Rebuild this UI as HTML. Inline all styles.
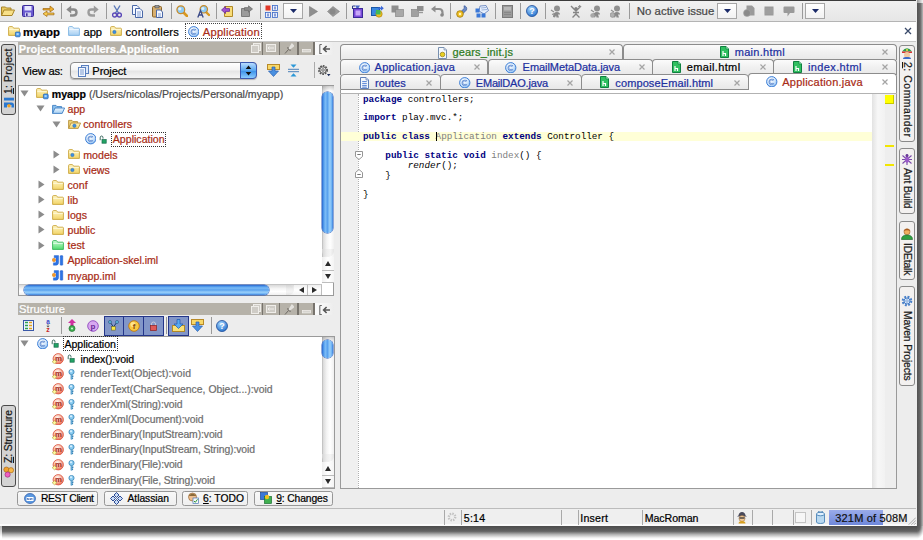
<!DOCTYPE html>
<html><head><meta charset="utf-8"><title>myapp - IntelliJ IDEA</title>
<style>
*{box-sizing:border-box;margin:0;padding:0}
html,body{width:923px;height:540px;overflow:hidden;background:#fff}
body{font-family:"Liberation Sans",sans-serif;font-size:10.6px;color:#000;position:relative}
.a{position:absolute}
.t{position:absolute;white-space:pre;line-height:14px;height:14px;-webkit-text-stroke:.22px currentColor}
#win{position:absolute;left:0;top:0;width:916.6px;height:525.8px;background:#ededed;}
.red{color:#a82c16}
.blue{color:#1c2fa0}
.green{color:#2c7a1c}
.gray{color:#7a7a7a}
.sep{position:absolute;width:1px;background:#9a9a9a;top:3px;height:16px}
.hdr{position:absolute;background:#b6b2a9;color:#fff;font-weight:bold;font-size:11px}
.tab{position:absolute;border:1px solid #8c8c8c;border-bottom:none;border-radius:4px 4px 0 0;background:linear-gradient(#fbfbfb,#f1f1f1 45%,#e8e8e8)}
.vtab{position:absolute;border:1px solid #8a8a8a;border-radius:3px;background:#ececec}
.vtxt{-webkit-text-stroke:.22px currentColor;position:absolute;white-space:pre;transform-origin:0 0;line-height:12px;height:12px;font-size:10.4px}
.btn{position:absolute;border:1px solid #979797;border-radius:2.5px;background:linear-gradient(#f8f8f8,#efefef);height:15px;top:491.3px}
.code{position:absolute;font-family:"Liberation Mono",monospace;font-size:9.3px;line-height:9.6px;height:9.6px;white-space:pre;color:#000}
.kw{font-weight:bold;color:#000080}
.un{color:#808080}
.x{position:absolute;color:#9a9a9a;font-size:11px;line-height:12px}
</style></head>
<body>
<div class="a" style="left:2px;top:525.8px;width:914.6px;height:13px;background:linear-gradient(180deg,rgba(0,0,0,.7) 0,rgba(0,0,0,.62) 40%,rgba(0,0,0,.3) 65%,rgba(0,0,0,.08) 88%,rgba(0,0,0,0) 100%)"></div>
<div class="a" style="left:916.6px;top:3px;width:8px;height:522.8px;background:linear-gradient(90deg,rgba(0,0,0,.68) 0,rgba(0,0,0,.6) 40%,rgba(0,0,0,.32) 70%,rgba(0,0,0,.12) 100%)"></div>
<div class="a" style="left:916.6px;top:525.8px;width:8px;height:13px;background:radial-gradient(ellipse 8px 13px at 0 0,rgba(0,0,0,.68) 0,rgba(0,0,0,.6) 40%,rgba(0,0,0,.3) 65%,rgba(0,0,0,.08) 88%,rgba(0,0,0,0) 100%)"></div>
<div class="a" style="left:0px;top:525.8px;width:2px;height:11px;background:linear-gradient(180deg,rgba(0,0,0,.3),rgba(0,0,0,0))"></div>
<div class="a" style="left:916.6px;top:0px;width:6px;height:3px;background:linear-gradient(90deg,rgba(0,0,0,.4),rgba(0,0,0,.05))"></div>
<div id="win">
<svg class="a" width="0" height="0" style="left:0;top:0"><defs><linearGradient id="fy" x1="0" y1="0" x2="0" y2="1"><stop offset="0" stop-color="#fff6c4"/><stop offset="1" stop-color="#f2d468"/></linearGradient><linearGradient id="fb" x1="0" y1="0" x2="0" y2="1"><stop offset="0" stop-color="#eef7fe"/><stop offset="1" stop-color="#a4cef2"/></linearGradient><linearGradient id="fg" x1="0" y1="0" x2="0" y2="1"><stop offset="0" stop-color="#ccfdd4"/><stop offset="1" stop-color="#4edb6e"/></linearGradient></defs></svg>
<div class="a" style="left:0;top:0;width:916px;height:1.2px;background:#3c3c3c"></div>
<div class="a" style="left:0;top:1px;width:916px;height:20px;background:linear-gradient(#f1f1f1,#e6e6e6)"></div>
<div class="a" style="left:0;top:21px;width:916px;height:1px;background:#b4b4b4"></div>
<div class="a" style="left:0;top:22px;width:916px;height:19px;background:#fff"></div>
<div class="a" style="left:0;top:41px;width:916px;height:1px;background:#c8c8c8"></div>
<div class="sep" style="left:61px"></div>
<div class="sep" style="left:106px"></div>
<div class="sep" style="left:171px"></div>
<div class="sep" style="left:216px"></div>
<div class="sep" style="left:260px"></div>
<div class="sep" style="left:346px"></div>
<div class="sep" style="left:450px"></div>
<div class="sep" style="left:495px"></div>
<div class="sep" style="left:520px"></div>
<div class="sep" style="left:545px"></div>
<div class="sep" style="left:629px"></div>
<div class="sep" style="left:802px"></div>
<svg class="a" style="left:1.0px;top:5.0px" width="14" height="12" viewBox="0 0 14 12"><path d="M0.5 10.5 V2 H4.5 L5.5 3 H10 V5" fill="#e8c860" stroke="#a88428" stroke-width="1"/><path d="M0.5 10.5 L3 5 H13.5 L11 10.5 Z" fill="#f8e088" stroke="#a88428" stroke-width="1"/></svg>
<svg class="a" style="left:22.0px;top:5.0px" width="12" height="12" viewBox="0 0 12 12"><rect x="0.5" y="0.5" width="11" height="11" rx="1" fill="#6a5ad0" stroke="#3a2a98"/><rect x="2.5" y="1" width="7" height="4.5" fill="#e8e8ff"/><rect x="3" y="7.5" width="6" height="4" fill="#d0d0f0"/><rect x="4" y="8.3" width="1.6" height="2.6" fill="#3a2a98"/></svg>
<svg class="a" style="left:41.5px;top:5.0px" width="13" height="12" viewBox="0 0 13 12"><path d="M1 3.5 H8 V1 L12 4.2 L8 7 V5 H1 Z" fill="#f0b030" stroke="#a06810" stroke-width=".7"/><path d="M12 8 H5 V6 L1 8.8 L5 11.5 V9.8 H12 Z" fill="#f8cc50" stroke="#a06810" stroke-width=".7"/></svg>
<svg class="a" style="left:66.0px;top:5.0px" width="12" height="12" viewBox="0 0 12 12"><path d="M3.5 4.5 H7.5 Q10.5 4.5 10.5 7.5 Q10.5 10.5 7 10.5 H4" fill="none" stroke="#8a8a8a" stroke-width="2.4"/><path d="M0.3 4.5 L5.2 0.5 V8.5 Z" fill="#8a8a8a"/></svg>
<svg class="a" style="left:87.0px;top:5.0px" width="12" height="12" viewBox="0 0 12 12"><path d="M8.5 4.5 H4.5 Q1.5 4.5 1.5 7.5 Q1.5 10.5 5 10.5 H8" fill="none" stroke="#9c9c9c" stroke-width="2.4"/><path d="M11.7 4.5 L6.8 0.5 V8.5 Z" fill="#9c9c9c"/></svg>
<svg class="a" style="left:112.0px;top:4.5px" width="10" height="13" viewBox="0 0 10 13"><path d="M2 0.5 L6.5 8 M8 0.5 L3.5 8" stroke="#5a78b8" stroke-width="1.4"/><circle cx="2.6" cy="10" r="2" fill="none" stroke="#5a48b8" stroke-width="1.4"/><circle cx="7.4" cy="10" r="2" fill="none" stroke="#5a48b8" stroke-width="1.4"/></svg>
<svg class="a" style="left:131.5px;top:4.5px" width="11" height="13" viewBox="0 0 11 13"><path d="M0.5 0.5 H5 L7 2.5 V9.5 H0.5 Z" fill="#f4f8ff" stroke="#4a68a8"/><path d="M3.5 3.5 H8 L10.5 6 V12.5 H3.5 Z" fill="#f4f8ff" stroke="#4a68a8"/><path d="M5 7 H9 M5 9 H9 M5 11 H9" stroke="#6a88c8" stroke-width=".8"/></svg>
<svg class="a" style="left:151.5px;top:4.5px" width="11" height="13" viewBox="0 0 11 13"><rect x="0.5" y="1.5" width="9" height="10.5" rx="1" fill="#d8b070" stroke="#8a6428"/><rect x="3" y="0.3" width="4" height="2.6" fill="#9a9a9a" stroke="#555" stroke-width=".6"/><path d="M4.5 5 H8.5 L10.5 7 V12.5 H4.5 Z" fill="#f4f8ff" stroke="#4a68a8"/><path d="M6 9 H9 M6 11 H9" stroke="#6a88c8" stroke-width=".8"/></svg>
<svg class="a" style="left:176.0px;top:5.0px" width="12" height="12" viewBox="0 0 12 12"><path d="M7 7 L11 11" stroke="#d89820" stroke-width="2.6" stroke-linecap="round"/><circle cx="4.8" cy="4.8" r="3.9" fill="#8ccaf4" stroke="#c88a28" stroke-width="1.2"/><circle cx="3.8" cy="3.8" r="1.6" fill="#d8f0ff"/></svg>
<svg class="a" style="left:196.5px;top:4.5px" width="13" height="13" viewBox="0 0 13 13"><path d="M8.5 6.5 L12 10" stroke="#d89820" stroke-width="2.4" stroke-linecap="round"/><circle cx="6.8" cy="4.3" r="3.7" fill="#8ccaf4" stroke="#c88a28" stroke-width="1.2"/><circle cx="5.9" cy="3.4" r="1.5" fill="#d8f0ff"/><path d="M0.8 12.5 L3.5 5.5 L6.2 12.5 M1.8 10 H5.2" stroke="#3a4a88" stroke-width="1.3" fill="none"/></svg>
<svg class="a" style="left:221.0px;top:5.0px" width="12" height="12" viewBox="0 0 12 12"><path d="M3.5 1.5 H11.5 V11.5 H3.5 Z" fill="#f8dc78" stroke="#b08a28"/><path d="M0.5 5 L4.5 1.5 V3.6 H8.5 V6.4 H4.5 V8.5 Z" fill="#a050d0" stroke="#5a2090" stroke-width=".7"/></svg>
<svg class="a" style="left:241.0px;top:5.0px" width="12" height="12" viewBox="0 0 12 12"><path d="M0.5 3.5 H8.5 V11.5 H0.5 Z" fill="#9a9a9a" stroke="#7a7a7a"/><path d="M11.5 4 L7.5 0.8 V2.6 H3.5 V5.4 H7.5 V7.2 Z" fill="#8a8a8a" stroke="#6a6a6a" stroke-width=".7"/></svg>
<svg class="a" style="left:264.5px;top:4.5px" width="13" height="13" viewBox="0 0 13 13"><rect x="0.5" y="0.5" width="5" height="5" fill="#e03828"/><rect x="7.5" y="0.5" width="5" height="5" fill="#e8f0ff" stroke="#3a68c8" stroke-width=".8"/><rect x="0.5" y="7.5" width="5" height="5" fill="#e8f0ff" stroke="#3a68c8" stroke-width=".8"/><rect x="7.5" y="7.5" width="5" height="5" fill="#e8f0ff" stroke="#3a68c8" stroke-width=".8"/><path d="M10 1.5 V4.5 M3 8.5 V11.5 M10 8.5 V11.5" stroke="#2a48a8" stroke-width="1"/></svg>
<div class="a" style="left:283px;top:3px;width:20px;height:16px;border:1px solid #a6a6a6;background:linear-gradient(#ffffff,#f2f2f2)"></div>
<svg class="a" style="left:289.5px;top:9.3px" width="7" height="4" viewBox="0 0 7 4"><path d="M0 0 H7 L3.5 4 Z" fill="#1a2a68"/></svg>
<svg class="a" style="left:308.5px;top:5.5px" width="9" height="11" viewBox="0 0 9 11"><path d="M0.5 0.5 L8.5 5.5 L0.5 10.5 Z" fill="#8e8e8e" stroke="#787878" stroke-width=".6"/></svg>
<svg class="a" style="left:326.5px;top:5.5px" width="13" height="11" viewBox="0 0 13 11"><path d="M0.5 5.5 L6 0.5 L12.5 5.5 L6 10.5 Z" fill="#9a9a9a" stroke="#808080" stroke-width=".6"/><circle cx="5.5" cy="5.5" r="3" fill="#888"/></svg>
<svg class="a" style="left:351.5px;top:4.5px" width="11" height="13" viewBox="0 0 11 13"><path d="M0.5 1 H3 M0.5 1 V4" stroke="#2a3a88" fill="none"/><path d="M3 0.5 H8 L6.5 3 H4.5 Z" fill="#4a68c8"/><rect x="1.5" y="3.5" width="9" height="9" fill="#7a4ad8" stroke="#3a2a98"/><rect x="3.5" y="5.5" width="5" height="5" fill="#c8a8f8"/></svg>
<svg class="a" style="left:370.5px;top:4.5px" width="13" height="13" viewBox="0 0 13 13"><rect x="0.5" y="2.5" width="8" height="8" fill="#3a88e0" stroke="#1a58a8"/><circle cx="8" cy="9" r="3.2" fill="#f0c020" stroke="#a07808" stroke-width=".6"/><rect x="5" y="5" width="4.5" height="4.5" fill="#40b858"/><path d="M7 2.5 H10 V0.8 L12.8 3.3 L10 5.8 V4.2 H7 Z" fill="#3a68d8"/></svg>
<svg class="a" style="left:390.5px;top:5.0px" width="13" height="12" viewBox="0 0 13 12"><rect x="0.5" y="0.5" width="7" height="7" fill="#8e8e8e"/><rect x="4.5" y="4.5" width="8" height="7" fill="#a8a8a8" stroke="#888" stroke-width=".7"/></svg>
<svg class="a" style="left:410.5px;top:5.0px" width="13" height="12" viewBox="0 0 13 12"><rect x="0.5" y="4.5" width="7" height="7" fill="#a0a0a0" stroke="#888" stroke-width=".7"/><rect x="6" y="1" width="6.5" height="5" fill="#8e8e8e"/><path d="M8 7.5 H12" stroke="#999" stroke-width="1.4"/></svg>
<svg class="a" style="left:430.5px;top:5.0px" width="13" height="12" viewBox="0 0 13 12"><path d="M2 4 H8 Q11.5 4 11.5 7.5 V10" fill="none" stroke="#8e8e8e" stroke-width="2.2"/><path d="M0 4 L4.5 0.5 V7.5 Z" fill="#8e8e8e"/><circle cx="11" cy="10" r="1.8" fill="#888"/></svg>
<svg class="a" style="left:456.0px;top:4.5px" width="12" height="13" viewBox="0 0 12 13"><path d="M8 0.8 Q11.5 1.5 10.5 5 L6 9.5 L4 7.5 L8.3 3.3 Z" fill="#6a8ac8" stroke="#3a5898" stroke-width=".7"/><circle cx="4" cy="9" r="3.3" fill="#f0c028" stroke="#a07808" stroke-width=".8"/><circle cx="4" cy="9" r="1.2" fill="#fff6c0"/></svg>
<svg class="a" style="left:475.0px;top:4.5px" width="14" height="13" viewBox="0 0 14 13"><path d="M5 1 L11 0.5 L13.5 5.5 L9 9 L4 6 Z" fill="#e8f0fc" stroke="#5a7ab8" stroke-width=".8"/><path d="M6 3 L11 2.5 M6.5 5 L12 4.5" stroke="#7a9ad0" stroke-width=".7"/><rect x="0.5" y="3.5" width="4" height="4" fill="#3a78d8"/><rect x="1.5" y="8.5" width="4" height="4" fill="#3a78d8"/><rect x="6.5" y="8.5" width="4" height="4" fill="#3a78d8"/></svg>
<svg class="a" style="left:501.5px;top:4.5px" width="11" height="13" viewBox="0 0 11 13"><rect x="0.5" y="0.5" width="10" height="12" fill="#9a9a9a" stroke="#7a7a7a"/><rect x="2" y="2" width="7" height="3.5" fill="#b8b8b8"/><path d="M2 7.5 H9 M2 9.5 H9" stroke="#848484" stroke-width=".8"/></svg>
<svg class="a" style="left:526.0px;top:5.0px" width="12" height="12" viewBox="0 0 12 12"><defs><radialGradient id="hg" cx=".4" cy=".3" r=".8"><stop offset="0" stop-color="#a8d8ff"/><stop offset="1" stop-color="#1a68c8"/></radialGradient></defs><circle cx="6" cy="6" r="5.5" fill="url(#hg)" stroke="#1a4a98" stroke-width=".8"/><text x="6" y="9.3" font-family="Liberation Sans, sans-serif" font-size="9" font-weight="bold" fill="#fff" text-anchor="middle">?</text></svg>
<svg class="a" style="left:550.0px;top:4.5px" width="12" height="13" viewBox="0 0 12 13"><circle cx="7" cy="3.5" r="3" fill="#909090"/><path d="M3 12 Q3 7 7 7 Q10 7 10 9.5 L8 9.5 L9 12.5 H6.5 L6 10.5 L5 12.5 Z" fill="#8a8a8a"/><path d="M1 5 L4 7 M2 9.5 L4.5 8.5" stroke="#909090" stroke-width="1.2"/></svg>
<svg class="a" style="left:570.0px;top:4.5px" width="12" height="13" viewBox="0 0 12 13"><path d="M1 1 L6 6 L11 1 M6 6 V9 M6 9 L2.5 12.5 M6 9 L9.5 12.5 M3 7.5 H9" stroke="#848484" stroke-width="1.4" fill="none"/><circle cx="6" cy="3.6" r="1.7" fill="#848484"/><path d="M9.5 0 V3 M8 1.5 H11" stroke="#909090" stroke-width=".9"/></svg>
<svg class="a" style="left:590.0px;top:4.5px" width="12" height="13" viewBox="0 0 12 13"><circle cx="7" cy="3.5" r="3" fill="#909090"/><path d="M3 12 Q3 7 7 7 Q10 7 10 9.5 L8 9.5 L9 12.5 H6.5 L6 10.5 L5 12.5 Z" fill="#8a8a8a"/><path d="M1 5 L4 7 M2 9.5 L4.5 8.5" stroke="#909090" stroke-width="1.2"/><circle cx="2.5" cy="10.5" r="2.2" fill="#a8a8a8"/></svg>
<svg class="a" style="left:610.0px;top:4.5px" width="12" height="13" viewBox="0 0 12 13"><circle cx="7" cy="3.5" r="3" fill="#909090"/><path d="M3 12 Q3 7 7 7 Q10 7 10 9.5 L8 9.5 L9 12.5 H6.5 L6 10.5 L5 12.5 Z" fill="#8a8a8a"/><path d="M1 5 L4 7 M2 9.5 L4.5 8.5" stroke="#909090" stroke-width="1.2"/><circle cx="2.5" cy="10" r="2.4" fill="#b0b0b0" stroke="#888" stroke-width=".6"/></svg>
<div class="t" style="left:636.8px;top:4px;font-size:11.4px;color:#484848;letter-spacing:0.02px">No active issue</div>
<div class="a" style="left:717px;top:3px;width:20px;height:16px;border:1px solid #a6a6a6;background:linear-gradient(#ffffff,#f2f2f2)"></div>
<svg class="a" style="left:723.5px;top:9.3px" width="7" height="4" viewBox="0 0 7 4"><path d="M0 0 H7 L3.5 4 Z" fill="#1a2a68"/></svg>
<svg class="a" style="left:743.0px;top:5.0px" width="12" height="12" viewBox="0 0 12 12"><path d="M3.5 0.5 H9 L11.5 3 V10.5 H3.5 Z" fill="#9a9a9a"/><circle cx="4" cy="8" r="3.5" fill="#8a8a8a" stroke="#a8a8a8" stroke-width=".6"/></svg>
<svg class="a" style="left:764.0px;top:6.0px" width="10" height="10" viewBox="0 0 10 10"><rect x="0.5" y="0.5" width="9" height="9" fill="#9a9a9a"/><path d="M0.5 3 H9.5 M0.5 5 H9.5 M0.5 7 H9.5" stroke="#aaa" stroke-width=".6"/></svg>
<svg class="a" style="left:783.0px;top:5.5px" width="12" height="11" viewBox="0 0 12 11"><path d="M1.5 0.5 H10.5 Q11.5 0.5 11.5 1.5 V6 Q11.5 7 10.5 7 H7 L4.5 10.5 V7 H1.5 Q0.5 7 0.5 6 V1.5 Q0.5 0.5 1.5 0.5 Z" fill="#9a9a9a"/></svg>
<div class="a" style="left:805px;top:3px;width:20px;height:16px;border:1px solid #a6a6a6;background:linear-gradient(#ffffff,#f2f2f2)"></div>
<svg class="a" style="left:811.5px;top:9.3px" width="7" height="4" viewBox="0 0 7 4"><path d="M0 0 H7 L3.5 4 Z" fill="#1a2a68"/></svg>
<svg class="a" style="left:7.5px;top:25.7px" width="13" height="12" viewBox="0 0 13 12"><path d="M0.6 9.4 L0.6 1.6 Q0.6 0.6 1.6 0.6 L4 0.6 Q4.8 0.6 5.2 1.4 L5.6 2.2 L10.6 2.2 Q11.4 2.2 11.4 3 L11.4 9.4 Z" fill="url(#fy)" stroke="#c9a53c" stroke-width=".9"/><path d="M1.2 3.4 H10.8" stroke="#fffbe0" stroke-width=".8"/><rect x="7.4" y="6" width="4.8" height="4.8" rx="1" fill="#4a98e8" stroke="#1f5fae" stroke-width=".7"/><rect x="8.5" y="7.1" width="2.2" height="2" fill="#a8d4fa"/></svg>
<div class="t " style="left:23px;top:24.5px;letter-spacing:0.06px;font-weight:bold;font-size:11.4px">myapp</div>
<svg class="a" style="left:68px;top:25.6px" width="12" height="10" viewBox="0 0 12 10"><path d="M0.6 9.4 L0.6 1.6 Q0.6 0.6 1.6 0.6 L4 0.6 Q4.8 0.6 5.2 1.4 L5.6 2.2 L10.6 2.2 Q11.4 2.2 11.4 3 L11.4 9.4 Z" fill="url(#fb)" stroke="#7ab2e2" stroke-width=".9"/><path d="M1.2 3.4 H10.8" stroke="#f6fbff" stroke-width=".8"/></svg>
<div class="t " style="left:83.5px;top:24.5px;letter-spacing:-0.06px;font-size:11.2px">app</div>
<svg class="a" style="left:110px;top:25.6px" width="12" height="10" viewBox="0 0 12 10"><path d="M0.6 9.4 L0.6 1.6 Q0.6 0.6 1.6 0.6 L4 0.6 Q4.8 0.6 5.2 1.4 L5.6 2.2 L10.6 2.2 Q11.4 2.2 11.4 3 L11.4 9.4 Z" fill="url(#fy)" stroke="#c9a53c" stroke-width=".9"/><path d="M1.2 3.4 H10.8" stroke="#fffbe0" stroke-width=".8"/><circle cx="4.4" cy="6" r="1.7" fill="#3d8fe0" stroke="#1f5fae" stroke-width=".4"/></svg>
<div class="t " style="left:125.5px;top:24.5px;letter-spacing:0.17px;font-size:11.2px">controllers</div>
<div class="a" style="left:185.2px;top:23.4px;width:76.8px;height:15.6px;border:1px dotted #444"></div>
<svg class="a" style="left:187.8px;top:25.6px" width="11.5" height="11.5" viewBox="0 0 11.5 11.5"><defs><radialGradient id="cg" cx=".4" cy=".32" r=".75"><stop offset="0" stop-color="#ffffff"/><stop offset=".55" stop-color="#cfe5fb"/><stop offset="1" stop-color="#7cb4f0"/></radialGradient></defs><circle cx="5.75" cy="5.75" r="5.15" fill="url(#cg)" stroke="#3f7fd6" stroke-width="1"/><path d="M7.55 4.25 A2.35 2.35 0 1 0 7.55 7.25" fill="none" stroke="#3c6fc4" stroke-width="1.5"/><path d="M7.55 4.25 A2.35 2.35 0 1 0 7.55 7.25" fill="none" stroke="#e8f2ff" stroke-width=".5"/></svg>
<div class="t red" style="left:202.8px;top:24.5px;letter-spacing:0.21px;font-size:11.2px">Application</div>
<svg class="a" style="left:904px;top:27px" width="8" height="8" viewBox="0 0 8 8"><path d="M1 1 L7 7 M7 1 L1 7" stroke="#3a4a6a" stroke-width="1.3"/></svg>
<div class="vtab" style="left:1px;top:44px;width:15px;height:70.5px;background:#d3d3d3;border-color:#4a4a4a;border-width:1.2px"></div>
<div class="vtxt" style="left:2.6px;top:94px;transform:rotate(-90deg);letter-spacing:0.16px;color:#1a1a1a"><u>1</u>: Project</div>
<svg class="a" style="left:3.5px;top:96.5px" width="10" height="11" viewBox="0 0 10 11"><g transform="rotate(-90 5 5.5)"><path d="M0 0 H5 V8 Q5 10.5 2.5 10.5 H0 V8 H2.5 V3.5 H0 Z" fill="#2a78d0"/><rect x="7" y="0" width="2.8" height="10.5" fill="#2a78d0"/><circle cx="1.8" cy="5.5" r="1.7" fill="#f0a020"/></g></svg>
<div class="vtab" style="left:1px;top:405px;width:15px;height:81.5px;background:#d3d3d3;border-color:#4a4a4a;border-width:1.2px"></div>
<div class="vtxt" style="left:2.6px;top:463px;transform:rotate(-90deg);letter-spacing:-0.12px;color:#1a1a1a"><u>Z</u>: Structure</div>
<svg class="a" style="left:3px;top:465.5px" width="11" height="12" viewBox="0 0 11 12"><circle cx="3.4" cy="3.6" r="2.6" fill="#f0a030" stroke="#a06010" stroke-width=".6"/><circle cx="8" cy="4.2" r="2.6" fill="#f8b848" stroke="#a06010" stroke-width=".6"/><circle cx="4.6" cy="8.6" r="2.6" fill="#f060c0" stroke="#902070" stroke-width=".6"/></svg>
<div class="hdr" style="left:18px;top:42.2px;width:296.7px;height:12.5px"></div>
<div class="t " style="left:18.8px;top:41.8px;letter-spacing:-0.00px;color:#fff;font-weight:bold;font-size:11px">Project controllers.Application</div>
<div class="a" style="left:314.7px;top:42.2px;width:19.3px;height:12.5px;background:linear-gradient(90deg,#fafafa,#f4f4f4 60%,#ececec)"></div>
<div class="a" style="left:262px;top:42.2px;width:1.3px;height:12.5px;background:#77736c"></div>
<div class="a" style="left:279.2px;top:42.2px;width:1.3px;height:12.5px;background:#77736c"></div>
<div class="a" style="left:297.3px;top:42.2px;width:1.3px;height:12.5px;background:#77736c"></div>
<div class="a" style="left:313.4px;top:42.2px;width:1.3px;height:12.5px;background:#77736c"></div>
<svg class="a" style="left:250.5px;top:43.2px" width="10" height="10" viewBox="0 0 10 10"><rect x="2.5" y="0.5" width="7" height="7" fill="#cfccc6" stroke="#efede9"/><rect x="0.5" y="2.5" width="7" height="7" fill="#cfccc6" stroke="#efede9"/></svg>
<svg class="a" style="left:266px;top:44.2px" width="10" height="9" viewBox="0 0 10 9"><rect x="0.5" y="0.5" width="9" height="7" fill="#cfccc6" stroke="#efede9"/><path d="M2 4 H8 M3.5 2.5 L2 4 L3.5 5.5" stroke="#f4f2ee" stroke-width=".9" fill="none"/></svg>
<svg class="a" style="left:283.5px;top:42.7px" width="10" height="11" viewBox="0 0 10 11"><path d="M1 10.5 L4.5 6.5" stroke="#6e6a64" stroke-width="1"/><path d="M3.5 4.5 L6.5 7.5" stroke="#5e5a54" stroke-width="1.3"/><path d="M5 6 L8 1.2 L9.6 2.8 L5.4 6.2" stroke="#e4e2de" stroke-width="1.5" fill="#d8d6d2"/></svg>
<svg class="a" style="left:301.5px;top:48.7px" width="10" height="4" viewBox="0 0 10 4"><rect x="0.5" y="0.5" width="8" height="2.4" fill="#d6d4cf" stroke="#efede9" stroke-width=".8"/></svg>
<svg class="a" style="left:319.3px;top:43.800000000000004px" width="12" height="10" viewBox="0 0 12 10"><path d="M0.8 0.5 H2.8 M0.8 0.5 V9.5 H2.8" stroke="#6a6a6a" stroke-width="1.1" fill="none"/><path d="M11 5 H5 M7.6 2 L4.6 5 L7.6 8" stroke="#555" stroke-width="1.6" fill="none"/></svg>
<div class="t " style="left:22.3px;top:63.7px;letter-spacing:-0.20px;font-size:11.2px">View as:</div>
<div class="a" style="left:69.6px;top:62px;width:187.8px;height:17px;border:1px solid #8a8a8a;border-radius:4px;background:linear-gradient(#ffffff,#f4f4f4 45%,#e6e6e6 55%,#f6f6f6);box-shadow:0 1px 1px rgba(0,0,0,.25)"></div>
<div class="a" style="left:240.4px;top:62px;width:17px;height:17px;border:1px solid #3a58b0;border-radius:0 4px 4px 0;background:linear-gradient(#b8dcff,#5aa8f0 50%,#3a90e8 52%,#8accff)"></div>
<svg class="a" style="left:245.4px;top:65px" width="7" height="11" viewBox="0 0 7 11"><path d="M3.5 0.5 L6.3 4 L0.7 4 Z M3.5 10.5 L6.3 7 L0.7 7 Z" fill="#111"/></svg>
<svg class="a" style="left:78px;top:64.5px" width="12" height="12" viewBox="0 0 12 12"><rect x="3.5" y="0.5" width="7" height="8" fill="#dde8f8" stroke="#5a80c0"/><rect x="0.5" y="2.5" width="7" height="9" fill="#f4f8ff" stroke="#5a80c0"/><path d="M2 5 H6 M2 7 H6 M2 9 H6" stroke="#5a80c0" stroke-width=".8"/></svg>
<div class="t " style="left:92.3px;top:63.7px;letter-spacing:-0.12px;font-size:11.2px">Project</div>
<svg class="a" style="left:267px;top:64px" width="13" height="13" viewBox="0 0 13 13"><rect x="0.5" y="0.5" width="12" height="5" fill="#f8d868" stroke="#b88a28"/><path d="M5 3 H8 V7 H11.5 L6.5 12.5 L1.5 7 H5 Z" fill="#4a90e0" stroke="#2a60b0" stroke-width=".7"/></svg>
<svg class="a" style="left:288px;top:64px" width="11" height="13" viewBox="0 0 11 13"><path d="M2.5 0.5 H8.5 L5.5 3.8 Z M2.5 12.5 H8.5 L5.5 9.2 Z" fill="#2a98d8"/><path d="M0 5.3 H11 M0 7.7 H11" stroke="#4a80b8" stroke-width="1"/></svg>
<div class="a" style="left:314px;top:62px;width:1px;height:16px;background:#aaa"></div>
<svg class="a" style="left:317px;top:64px" width="14" height="13" viewBox="0 0 14 13"><circle cx="6" cy="6" r="4" fill="none" stroke="#555" stroke-width="2" stroke-dasharray="1.6 1"/><circle cx="6" cy="6" r="3.2" fill="#e8e8e8" stroke="#555" stroke-width=".9"/><circle cx="6" cy="6" r="1.3" fill="none" stroke="#555" stroke-width=".8"/><path d="M10 10 H13.5 L11.7 12.3 Z" fill="#1a2a58"/></svg>
<div class="a" style="left:18.3px;top:84.8px;width:316px;height:211.4px;background:#fff;border:1px solid #9a9a9a"></div>
<svg class="a" style="left:20.3px;top:90.3px" width="9" height="7" viewBox="0 0 9 7"><path d="M0.5 0.5 L8.5 0.5 L4.5 6.5 Z" fill="#8c8c8c"/></svg>
<svg class="a" style="left:36.0px;top:88.3px" width="13" height="12" viewBox="0 0 13 12"><path d="M0.6 9.4 L0.6 1.6 Q0.6 0.6 1.6 0.6 L4 0.6 Q4.8 0.6 5.2 1.4 L5.6 2.2 L10.6 2.2 Q11.4 2.2 11.4 3 L11.4 9.4 Z" fill="url(#fy)" stroke="#c9a53c" stroke-width=".9"/><path d="M1.2 3.4 H10.8" stroke="#fffbe0" stroke-width=".8"/><rect x="7.4" y="6" width="4.8" height="4.8" rx="1" fill="#4a98e8" stroke="#1f5fae" stroke-width=".7"/><rect x="8.5" y="7.1" width="2.2" height="2" fill="#a8d4fa"/></svg>
<div class="t " style="left:51.8px;top:87.1px;letter-spacing:0.00px;font-size:10.6px"><span style="font-weight:bold;color:#000">myapp</span><span style="color:#4c4c4c"> (/Users/nicolas/Projects/Personal/myapp)</span></div>
<svg class="a" style="left:36.05px;top:105.42px" width="9" height="7" viewBox="0 0 9 7"><path d="M0.5 0.5 L8.5 0.5 L4.5 6.5 Z" fill="#8c8c8c"/></svg>
<svg class="a" style="left:51.75px;top:103.92px" width="13" height="10" viewBox="0 0 13 10"><path d="M0.6 9.4 L0.6 1.4 L4 1.4 L5 2.6 L9.6 2.6 L9.6 4" fill="#8cc0ec" stroke="#3f80c4" stroke-width=".9"/><path d="M0.6 9.4 L3 4 L12.6 4 L10.2 9.4 Z" fill="url(#fb)" stroke="#3f80c4" stroke-width=".9"/></svg>
<div class="t " style="left:67.55px;top:102.22px;font-size:10.6px"><span class="red">app</span></div>
<svg class="a" style="left:51.8px;top:120.53999999999999px" width="9" height="7" viewBox="0 0 9 7"><path d="M0.5 0.5 L8.5 0.5 L4.5 6.5 Z" fill="#8c8c8c"/></svg>
<svg class="a" style="left:67.5px;top:119.03999999999999px" width="13" height="10" viewBox="0 0 13 10"><path d="M0.6 9.4 L0.6 1.4 L4 1.4 L5 2.6 L9.6 2.6 L9.6 4" fill="#ecd278" stroke="#b8923a" stroke-width=".9"/><path d="M0.6 9.4 L3 4 L12.6 4 L10.2 9.4 Z" fill="url(#fy)" stroke="#b8923a" stroke-width=".9"/><circle cx="6.4" cy="6.8" r="1.7" fill="#3d8fe0" stroke="#1f5fae" stroke-width=".4"/></svg>
<div class="t " style="left:83.3px;top:117.33999999999999px;font-size:10.6px"><span class="red">controllers</span></div>
<svg class="a" style="left:84.75px;top:133.16px" width="11.5" height="11.5" viewBox="0 0 11.5 11.5"><defs><radialGradient id="cg" cx=".4" cy=".32" r=".75"><stop offset="0" stop-color="#ffffff"/><stop offset=".55" stop-color="#cfe5fb"/><stop offset="1" stop-color="#7cb4f0"/></radialGradient></defs><circle cx="5.75" cy="5.75" r="5.15" fill="url(#cg)" stroke="#3f7fd6" stroke-width="1"/><path d="M7.55 4.25 A2.35 2.35 0 1 0 7.55 7.25" fill="none" stroke="#3c6fc4" stroke-width="1.5"/><path d="M7.55 4.25 A2.35 2.35 0 1 0 7.55 7.25" fill="none" stroke="#e8f2ff" stroke-width=".5"/></svg>
<svg class="a" style="left:99.25px;top:134.66px" width="8" height="9" viewBox="0 0 8 9"><path d="M1.2 5.2 L1.2 2.8 Q1.2 1 2.6 1 Q4 1 4 2.8 L4 3.6" fill="none" stroke="#2a5a50" stroke-width=".9"/><rect x="3" y="4.6" width="4.2" height="3.6" fill="#22a464" stroke="#14684a" stroke-width=".7"/></svg>
<div class="a" style="left:111px;top:131.56px;width:55px;height:15px;border:1px dotted #333"></div>
<div class="t " style="left:112.8px;top:132.46px;font-size:10.6px"><span class="red">Application</span></div>
<svg class="a" style="left:53.3px;top:149.78px" width="7" height="9" viewBox="0 0 7 9"><path d="M0.5 0.5 L6.5 4.5 L0.5 8.5 Z" fill="#8c8c8c"/></svg>
<svg class="a" style="left:67.5px;top:149.28px" width="12" height="10" viewBox="0 0 12 10"><path d="M0.6 9.4 L0.6 1.6 Q0.6 0.6 1.6 0.6 L4 0.6 Q4.8 0.6 5.2 1.4 L5.6 2.2 L10.6 2.2 Q11.4 2.2 11.4 3 L11.4 9.4 Z" fill="url(#fy)" stroke="#c9a53c" stroke-width=".9"/><path d="M1.2 3.4 H10.8" stroke="#fffbe0" stroke-width=".8"/><circle cx="4.4" cy="6" r="1.7" fill="#3d8fe0" stroke="#1f5fae" stroke-width=".4"/></svg>
<div class="t " style="left:83.3px;top:147.58px;font-size:10.6px"><span class="red">models</span></div>
<svg class="a" style="left:53.3px;top:164.89999999999998px" width="7" height="9" viewBox="0 0 7 9"><path d="M0.5 0.5 L6.5 4.5 L0.5 8.5 Z" fill="#8c8c8c"/></svg>
<svg class="a" style="left:67.5px;top:164.39999999999998px" width="12" height="10" viewBox="0 0 12 10"><path d="M0.6 9.4 L0.6 1.6 Q0.6 0.6 1.6 0.6 L4 0.6 Q4.8 0.6 5.2 1.4 L5.6 2.2 L10.6 2.2 Q11.4 2.2 11.4 3 L11.4 9.4 Z" fill="url(#fy)" stroke="#c9a53c" stroke-width=".9"/><path d="M1.2 3.4 H10.8" stroke="#fffbe0" stroke-width=".8"/><circle cx="4.4" cy="6" r="1.7" fill="#3d8fe0" stroke="#1f5fae" stroke-width=".4"/></svg>
<div class="t " style="left:83.3px;top:162.7px;font-size:10.6px"><span class="red">views</span></div>
<svg class="a" style="left:37.55px;top:180.01999999999998px" width="7" height="9" viewBox="0 0 7 9"><path d="M0.5 0.5 L6.5 4.5 L0.5 8.5 Z" fill="#8c8c8c"/></svg>
<svg class="a" style="left:51.75px;top:179.51999999999998px" width="12" height="10" viewBox="0 0 12 10"><path d="M0.6 9.4 L0.6 1.6 Q0.6 0.6 1.6 0.6 L4 0.6 Q4.8 0.6 5.2 1.4 L5.6 2.2 L10.6 2.2 Q11.4 2.2 11.4 3 L11.4 9.4 Z" fill="url(#fy)" stroke="#c9a53c" stroke-width=".9"/><path d="M1.2 3.4 H10.8" stroke="#fffbe0" stroke-width=".8"/></svg>
<div class="t " style="left:67.55px;top:177.82px;font-size:10.6px"><span class="red">conf</span></div>
<svg class="a" style="left:37.55px;top:195.14px" width="7" height="9" viewBox="0 0 7 9"><path d="M0.5 0.5 L6.5 4.5 L0.5 8.5 Z" fill="#8c8c8c"/></svg>
<svg class="a" style="left:51.75px;top:194.64px" width="12" height="10" viewBox="0 0 12 10"><path d="M0.6 9.4 L0.6 1.6 Q0.6 0.6 1.6 0.6 L4 0.6 Q4.8 0.6 5.2 1.4 L5.6 2.2 L10.6 2.2 Q11.4 2.2 11.4 3 L11.4 9.4 Z" fill="url(#fy)" stroke="#c9a53c" stroke-width=".9"/><path d="M1.2 3.4 H10.8" stroke="#fffbe0" stroke-width=".8"/></svg>
<div class="t " style="left:67.55px;top:192.94px;font-size:10.6px"><span class="red">lib</span></div>
<svg class="a" style="left:37.55px;top:210.26px" width="7" height="9" viewBox="0 0 7 9"><path d="M0.5 0.5 L6.5 4.5 L0.5 8.5 Z" fill="#8c8c8c"/></svg>
<svg class="a" style="left:51.75px;top:209.76px" width="12" height="10" viewBox="0 0 12 10"><path d="M0.6 9.4 L0.6 1.6 Q0.6 0.6 1.6 0.6 L4 0.6 Q4.8 0.6 5.2 1.4 L5.6 2.2 L10.6 2.2 Q11.4 2.2 11.4 3 L11.4 9.4 Z" fill="url(#fy)" stroke="#c9a53c" stroke-width=".9"/><path d="M1.2 3.4 H10.8" stroke="#fffbe0" stroke-width=".8"/></svg>
<div class="t " style="left:67.55px;top:208.06px;font-size:10.6px"><span class="red">logs</span></div>
<svg class="a" style="left:37.55px;top:225.38px" width="7" height="9" viewBox="0 0 7 9"><path d="M0.5 0.5 L6.5 4.5 L0.5 8.5 Z" fill="#8c8c8c"/></svg>
<svg class="a" style="left:51.75px;top:224.88px" width="12" height="10" viewBox="0 0 12 10"><path d="M0.6 9.4 L0.6 1.6 Q0.6 0.6 1.6 0.6 L4 0.6 Q4.8 0.6 5.2 1.4 L5.6 2.2 L10.6 2.2 Q11.4 2.2 11.4 3 L11.4 9.4 Z" fill="url(#fy)" stroke="#c9a53c" stroke-width=".9"/><path d="M1.2 3.4 H10.8" stroke="#fffbe0" stroke-width=".8"/></svg>
<div class="t " style="left:67.55px;top:223.18px;font-size:10.6px"><span class="red">public</span></div>
<svg class="a" style="left:37.55px;top:240.5px" width="7" height="9" viewBox="0 0 7 9"><path d="M0.5 0.5 L6.5 4.5 L0.5 8.5 Z" fill="#8c8c8c"/></svg>
<svg class="a" style="left:51.75px;top:240.0px" width="12" height="10" viewBox="0 0 12 10"><path d="M0.6 9.4 L0.6 1.6 Q0.6 0.6 1.6 0.6 L4 0.6 Q4.8 0.6 5.2 1.4 L5.6 2.2 L10.6 2.2 Q11.4 2.2 11.4 3 L11.4 9.4 Z" fill="url(#fg)" stroke="#34b458" stroke-width=".9"/><path d="M1.2 3.4 H10.8" stroke="#eafff0" stroke-width=".8"/></svg>
<div class="t " style="left:67.55px;top:238.3px;font-size:10.6px"><span class="red">test</span></div>
<svg class="a" style="left:52.35px;top:255.12px" width="12" height="11" viewBox="0 0 12 11"><path d="M2.2 0.6 H6.6 V7.4 Q6.6 10.2 3.6 10.2 H1.4 V7.8 H3.2 Q4 7.8 4 7 V2.8 H2.2 Z" fill="#2d74e6" stroke="#1d58c0" stroke-width=".4"/><rect x="8.2" y="0.6" width="2.6" height="9.6" rx=".6" fill="#2d74e6" stroke="#1d58c0" stroke-width=".4"/><circle cx="1.9" cy="5" r="1.7" fill="#f59a23" stroke="#c86a10" stroke-width=".4"/></svg>
<div class="t " style="left:67.55px;top:253.42000000000002px;font-size:10.6px"><span class="red">Application-skel.iml</span></div>
<svg class="a" style="left:52.35px;top:270.24px" width="12" height="11" viewBox="0 0 12 11"><path d="M2.2 0.6 H6.6 V7.4 Q6.6 10.2 3.6 10.2 H1.4 V7.8 H3.2 Q4 7.8 4 7 V2.8 H2.2 Z" fill="#2d74e6" stroke="#1d58c0" stroke-width=".4"/><rect x="8.2" y="0.6" width="2.6" height="9.6" rx=".6" fill="#2d74e6" stroke="#1d58c0" stroke-width=".4"/><circle cx="1.9" cy="5" r="1.7" fill="#f59a23" stroke="#c86a10" stroke-width=".4"/></svg>
<div class="t " style="left:67.55px;top:268.54px;font-size:10.6px"><span class="red">myapp.iml</span></div>
<div class="a" style="left:322px;top:85.8px;width:11.5px;height:197.0px;background:linear-gradient(90deg,#d9d9d9,#f4f4f4 35%,#fff 65%,#f0f0f0);border-left:1px solid #c4c4c4"></div>
<div class="a" style="left:322px;top:85.8px;width:11.5px;height:5px;background:linear-gradient(rgba(0,0,0,.18),rgba(0,0,0,0))"></div>
<div class="a" style="left:322px;top:248.8px;width:11.5px;height:8px;border-radius:0 0 6px 6px;background:linear-gradient(90deg,#d4d4d4,#ededed 40%,#f4f4f4 70%,#e4e4e4)"></div>
<div class="a" style="left:322px;top:256.8px;width:11.5px;height:26px;background:linear-gradient(90deg,#efefef,#fff 50%,#f4f4f4)"></div>
<div class="a" style="left:322px;top:269.8px;width:11.5px;height:1px;background:#bdbdbd"></div>
<div class="a" style="left:322px;top:282.3px;width:11.5px;height:1px;background:#bdbdbd"></div>
<svg class="a" style="left:325px;top:260.8px" width="6" height="5" viewBox="0 0 6 5"><path d="M3 0 L6 5 L0 5 Z" fill="#2a2a2a"/></svg>
<svg class="a" style="left:325px;top:274.3px" width="6" height="5" viewBox="0 0 6 5"><path d="M3 5 L6 0 L0 0 Z" fill="#2a2a2a"/></svg>
<div class="a" style="left:322.4px;top:91.5px;width:10.2px;height:141.7px;border-radius:5.1px;background:linear-gradient(90deg,#2a66cc 0,#4c96ea 14%,#7cbcf6 30%,#5aa2ee 50%,#9ad0fa 72%,#6eb2f4 88%,#3a7cd8 100%);box-shadow:0 0 0 .5px #2a58b8"></div>
<div class="a" style="left:19.3px;top:283.8px;width:303px;height:11.6px;background:linear-gradient(#d9d9d9,#f4f4f4 35%,#fff 65%,#f0f0f0);border-top:1px solid #c4c4c4"></div>
<div class="a" style="left:286px;top:284.8px;width:8px;height:10.6px;border-radius:0 6px 6px 0;background:linear-gradient(#d4d4d4,#ededed 40%,#f4f4f4 70%,#e4e4e4)"></div>
<div class="a" style="left:294px;top:284.8px;width:28px;height:10.6px;background:linear-gradient(#efefef,#fff 50%,#f4f4f4)"></div>
<div class="a" style="left:307.4px;top:284.8px;width:1px;height:10.6px;background:#bdbdbd"></div>
<div class="a" style="left:321.4px;top:284.8px;width:1px;height:10.6px;background:#bdbdbd"></div>
<div class="a" style="left:322.4px;top:283.8px;width:11px;height:11.6px;background:#fff"></div>
<svg class="a" style="left:298.5px;top:287.2px" width="5" height="6" viewBox="0 0 5 6"><path d="M0 3 L5 0 L5 6 Z" fill="#2a2a2a"/></svg>
<svg class="a" style="left:312px;top:287.2px" width="5" height="6" viewBox="0 0 5 6"><path d="M5 3 L0 0 L0 6 Z" fill="#2a2a2a"/></svg>
<div class="a" style="left:24px;top:285.2px;width:245px;height:9.6px;border-radius:4.8px;background:linear-gradient(180deg,#2a66cc 0,#4c96ea 14%,#7cbcf6 30%,#5aa2ee 50%,#9ad0fa 72%,#6eb2f4 88%,#3a7cd8 100%);box-shadow:0 0 0 .5px #2a58b8"></div>
<div class="hdr" style="left:18px;top:303px;width:296.5px;height:12.2px"></div>
<div class="t " style="left:19px;top:302.2px;letter-spacing:0.07px;color:#fff;font-size:11.2px">Structure</div>
<div class="a" style="left:314.7px;top:303px;width:19.3px;height:12.2px;background:linear-gradient(90deg,#fafafa,#f4f4f4 60%,#ececec)"></div>
<div class="a" style="left:262px;top:303px;width:1.3px;height:12.2px;background:#77736c"></div>
<div class="a" style="left:279.2px;top:303px;width:1.3px;height:12.2px;background:#77736c"></div>
<div class="a" style="left:297.3px;top:303px;width:1.3px;height:12.2px;background:#77736c"></div>
<div class="a" style="left:313.4px;top:303px;width:1.3px;height:12.2px;background:#77736c"></div>
<svg class="a" style="left:250.5px;top:304px" width="10" height="10" viewBox="0 0 10 10"><rect x="2.5" y="0.5" width="7" height="7" fill="#cfccc6" stroke="#efede9"/><rect x="0.5" y="2.5" width="7" height="7" fill="#cfccc6" stroke="#efede9"/></svg>
<svg class="a" style="left:266px;top:305px" width="10" height="9" viewBox="0 0 10 9"><rect x="0.5" y="0.5" width="9" height="7" fill="#cfccc6" stroke="#efede9"/><path d="M2 4 H8 M3.5 2.5 L2 4 L3.5 5.5" stroke="#f4f2ee" stroke-width=".9" fill="none"/></svg>
<svg class="a" style="left:283.5px;top:303.5px" width="10" height="11" viewBox="0 0 10 11"><path d="M1 10.5 L4.5 6.5" stroke="#6e6a64" stroke-width="1"/><path d="M3.5 4.5 L6.5 7.5" stroke="#5e5a54" stroke-width="1.3"/><path d="M5 6 L8 1.2 L9.6 2.8 L5.4 6.2" stroke="#e4e2de" stroke-width="1.5" fill="#d8d6d2"/></svg>
<svg class="a" style="left:301.5px;top:309.5px" width="10" height="4" viewBox="0 0 10 4"><rect x="0.5" y="0.5" width="8" height="2.4" fill="#d6d4cf" stroke="#efede9" stroke-width=".8"/></svg>
<svg class="a" style="left:319.3px;top:304.6px" width="12" height="10" viewBox="0 0 12 10"><path d="M0.8 0.5 H2.8 M0.8 0.5 V9.5 H2.8" stroke="#6a6a6a" stroke-width="1.1" fill="none"/><path d="M11 5 H5 M7.6 2 L4.6 5 L7.6 8" stroke="#555" stroke-width="1.6" fill="none"/></svg>
<div class="a" style="left:103.5px;top:315.5px;width:21px;height:20px;background:#8296c8;border:1.2px solid #24368a"></div>
<div class="a" style="left:123.3px;top:315.5px;width:21px;height:20px;background:#8296c8;border:1.2px solid #24368a"></div>
<div class="a" style="left:143.2px;top:315.5px;width:21px;height:20px;background:#8296c8;border:1.2px solid #24368a"></div>
<div class="a" style="left:168px;top:315.5px;width:21px;height:20px;background:#8296c8;border:1.2px solid #24368a"></div>
<div class="a" style="left:61px;top:317px;width:1px;height:17px;background:#9a9a9a"></div>
<div class="a" style="left:166px;top:317px;width:1px;height:17px;background:#9a9a9a"></div>
<div class="a" style="left:210.5px;top:317px;width:1px;height:17px;background:#9a9a9a"></div>
<svg class="a" style="left:23px;top:320px" width="11" height="11" viewBox="0 0 11 11"><rect x="0.5" y="0.5" width="10" height="10" fill="#f0f4ff" stroke="#3a58a8"/><path d="M2 2.5 H5 M2 5.5 H5 M2 8.5 H5" stroke="#30a050" stroke-width="1.6"/><path d="M6 2.5 H9 M6 5.5 H9 M6 8.5 H9" stroke="#e0a020" stroke-width="1.6"/></svg>
<svg class="a" style="left:44px;top:318.5px" width="8" height="14" viewBox="0 0 8 14"><text x="4" y="4.5" font-family="Liberation Sans, sans-serif" font-size="6.5" font-weight="bold" fill="#3a48c8" text-anchor="middle">a</text><text x="4" y="13" font-family="Liberation Sans, sans-serif" font-size="7" font-weight="bold" fill="#c82828" text-anchor="middle">z</text><path d="M4 5 V8 M2.8 6.8 L4 8.2 L5.2 6.8" stroke="#444" stroke-width=".7" fill="none"/></svg>
<svg class="a" style="left:67px;top:319px" width="10" height="13" viewBox="0 0 10 13"><path d="M5 0 L9 4 H6.5 V7 H3.5 V4 H1 Z" fill="#d030a0"/><circle cx="5" cy="9.5" r="3" fill="#40b050" stroke="#207030" stroke-width=".7"/><circle cx="5" cy="9.5" r="1" fill="#d0ffd8"/></svg>
<svg class="a" style="left:87px;top:319.5px" width="12" height="12" viewBox="0 0 12 12"><circle cx="6" cy="6" r="5.3" fill="#d8a8f0" stroke="#9048c0" stroke-width=".9"/><text x="6" y="9" font-family="Liberation Sans, sans-serif" font-size="8" font-weight="bold" fill="#6a2898" text-anchor="middle">p</text></svg>
<svg class="a" style="left:108px;top:320px" width="11" height="11" viewBox="0 0 11 11"><path d="M5.5 7 L2 2 M5.5 7 L9 2" stroke="#1a3a6a" stroke-width="1"/><circle cx="2" cy="2" r="1.5" fill="#60c0e0" stroke="#1a3a6a" stroke-width=".5"/><circle cx="9" cy="2" r="1.5" fill="#60c0e0" stroke="#1a3a6a" stroke-width=".5"/><rect x="3.7" y="6.5" width="3.6" height="3.6" fill="#f8e840" stroke="#6a6010" stroke-width=".5"/></svg>
<svg class="a" style="left:127.5px;top:319.5px" width="12" height="12" viewBox="0 0 12 12"><circle cx="6" cy="6" r="5.3" fill="#f8c840" stroke="#c07810" stroke-width=".9"/><circle cx="5" cy="4.5" r="2.5" fill="#fff0b0" opacity=".7"/><text x="6" y="9" font-family="Liberation Sans, sans-serif" font-size="8" font-weight="bold" fill="#8a4808" text-anchor="middle">f</text></svg>
<svg class="a" style="left:149px;top:320.5px" width="9" height="10" viewBox="0 0 9 10"><path d="M2.5 5 V3 Q2.5 1 4.5 1 Q6.5 1 6.5 3 V5" fill="none" stroke="#c8c8d8" stroke-width="1"/><rect x="1.5" y="4.5" width="6" height="5" fill="#e05858" stroke="#8a2020" stroke-width=".7"/></svg>
<svg class="a" style="left:172px;top:319px" width="13" height="13" viewBox="0 0 13 13"><rect x="0.5" y="6.5" width="12" height="6" fill="#f8e078" stroke="#b08828"/><path d="M5 0.5 H8 V5 H11 L6.5 9.5 L2 5 H5 Z" fill="#58a8f0" stroke="#1a58b0" stroke-width=".7"/></svg>
<svg class="a" style="left:190.5px;top:319px" width="13" height="13" viewBox="0 0 13 13"><rect x="0.5" y="0.5" width="12" height="5" fill="#f8d868" stroke="#b88a28"/><path d="M5 3 H8 V7 H11.5 L6.5 12.5 L1.5 7 H5 Z" fill="#4a90e0" stroke="#2a60b0" stroke-width=".7"/></svg>
<svg class="a" style="left:216.3px;top:319.5px" width="12" height="12" viewBox="0 0 12 12"><circle cx="6" cy="6" r="5.5" fill="url(#hg)" stroke="#1a4a98" stroke-width=".8"/><text x="6" y="9.3" font-family="Liberation Sans, sans-serif" font-size="9" font-weight="bold" fill="#fff" text-anchor="middle">?</text></svg>
<div class="a" style="left:18px;top:335.5px;width:317px;height:153px;background:#fff;border:1px solid #9a9a9a"></div>
<svg class="a" style="left:20.1px;top:340.3px" width="9" height="7" viewBox="0 0 9 7"><path d="M0.5 0.5 L8.5 0.5 L4.5 6.5 Z" fill="#8c8c8c"/></svg>
<svg class="a" style="left:36.5px;top:337.8px" width="11.5" height="11.5" viewBox="0 0 11.5 11.5"><defs><radialGradient id="cg" cx=".4" cy=".32" r=".75"><stop offset="0" stop-color="#ffffff"/><stop offset=".55" stop-color="#cfe5fb"/><stop offset="1" stop-color="#7cb4f0"/></radialGradient></defs><circle cx="5.75" cy="5.75" r="5.15" fill="url(#cg)" stroke="#3f7fd6" stroke-width="1"/><path d="M7.55 4.25 A2.35 2.35 0 1 0 7.55 7.25" fill="none" stroke="#3c6fc4" stroke-width="1.5"/><path d="M7.55 4.25 A2.35 2.35 0 1 0 7.55 7.25" fill="none" stroke="#e8f2ff" stroke-width=".5"/></svg>
<svg class="a" style="left:51px;top:339.3px" width="8" height="9" viewBox="0 0 8 9"><path d="M1.2 5.2 L1.2 2.8 Q1.2 1 2.6 1 Q4 1 4 2.8 L4 3.6" fill="none" stroke="#2a5a50" stroke-width=".9"/><rect x="3" y="4.6" width="4.2" height="3.6" fill="#22a464" stroke="#14684a" stroke-width=".7"/></svg>
<div class="a" style="left:63px;top:336.3px;width:55px;height:15px;border:1px dotted #333"></div>
<div class="t " style="left:64.4px;top:337.1px;letter-spacing:-0.03px;font-size:10.6px">Application</div>
<svg class="a" style="left:52px;top:352.97px" width="12.5" height="11.5" viewBox="0 0 12.5 11.5"><defs><radialGradient id="mg" cx=".42" cy=".28" r=".78"><stop offset="0" stop-color="#fff4ee"/><stop offset=".5" stop-color="#fab4a0"/><stop offset="1" stop-color="#ea6650"/></radialGradient></defs><circle cx="6.25" cy="5.75" r="5.15" fill="url(#mg)" stroke="#dc5c46" stroke-width=".9"/><text x="6.55" y="7.95" font-family="Liberation Sans, sans-serif" font-size="7.8" font-weight="bold" fill="#a02a1c" text-anchor="middle">m</text><path d="M0.2 8.8 L2.5 6.8 L4.8 8.8 L2.5 10.8 Z" fill="#fff9a0" stroke="#a89a38" stroke-width=".6"/></svg>
<svg class="a" style="left:67px;top:354.47px" width="8" height="9" viewBox="0 0 8 9"><path d="M1.2 5.2 L1.2 2.8 Q1.2 1 2.6 1 Q4 1 4 2.8 L4 3.6" fill="none" stroke="#2a5a50" stroke-width=".9"/><rect x="3" y="4.6" width="4.2" height="3.6" fill="#22a464" stroke="#14684a" stroke-width=".7"/></svg>
<div class="t " style="left:80.5px;top:352.27000000000004px;letter-spacing:-0.11px;font-size:10.6px;color:#000">index():void</div>
<svg class="a" style="left:52px;top:368.14px" width="12.5" height="11.5" viewBox="0 0 12.5 11.5"><defs><radialGradient id="mg" cx=".42" cy=".28" r=".78"><stop offset="0" stop-color="#fff4ee"/><stop offset=".5" stop-color="#fab4a0"/><stop offset="1" stop-color="#ea6650"/></radialGradient></defs><circle cx="6.25" cy="5.75" r="5.15" fill="url(#mg)" stroke="#dc5c46" stroke-width=".9"/><text x="6.55" y="7.95" font-family="Liberation Sans, sans-serif" font-size="7.8" font-weight="bold" fill="#a02a1c" text-anchor="middle">m</text><path d="M0.2 8.8 L2.5 6.8 L4.8 8.8 L2.5 10.8 Z" fill="#fff9a0" stroke="#a89a38" stroke-width=".6"/></svg>
<svg class="a" style="left:67.7px;top:368.64px" width="7" height="11" viewBox="0 0 7 11"><circle cx="3.5" cy="3" r="2.6" fill="#8ccdf2" stroke="#3a86b8" stroke-width=".8"/><circle cx="3" cy="2.3" r="1" fill="#dff2fd"/><path d="M3.5 5.4 L3.5 10.4 M3.5 7.2 L5.4 7.2 M3.5 9.2 L5.1 9.2" stroke="#3a86b8" stroke-width="1.6" fill="none"/><path d="M3.3 5.6 L3.3 10" stroke="#8ccdf2" stroke-width=".6"/></svg>
<div class="t " style="left:80.5px;top:367.44px;letter-spacing:0.11px;font-size:10.4px;color:#6e6e6e">renderText(Object):void</div>
<svg class="a" style="left:52px;top:383.31px" width="12.5" height="11.5" viewBox="0 0 12.5 11.5"><defs><radialGradient id="mg" cx=".42" cy=".28" r=".78"><stop offset="0" stop-color="#fff4ee"/><stop offset=".5" stop-color="#fab4a0"/><stop offset="1" stop-color="#ea6650"/></radialGradient></defs><circle cx="6.25" cy="5.75" r="5.15" fill="url(#mg)" stroke="#dc5c46" stroke-width=".9"/><text x="6.55" y="7.95" font-family="Liberation Sans, sans-serif" font-size="7.8" font-weight="bold" fill="#a02a1c" text-anchor="middle">m</text><path d="M0.2 8.8 L2.5 6.8 L4.8 8.8 L2.5 10.8 Z" fill="#fff9a0" stroke="#a89a38" stroke-width=".6"/></svg>
<svg class="a" style="left:67.7px;top:383.81px" width="7" height="11" viewBox="0 0 7 11"><circle cx="3.5" cy="3" r="2.6" fill="#8ccdf2" stroke="#3a86b8" stroke-width=".8"/><circle cx="3" cy="2.3" r="1" fill="#dff2fd"/><path d="M3.5 5.4 L3.5 10.4 M3.5 7.2 L5.4 7.2 M3.5 9.2 L5.1 9.2" stroke="#3a86b8" stroke-width="1.6" fill="none"/><path d="M3.3 5.6 L3.3 10" stroke="#8ccdf2" stroke-width=".6"/></svg>
<div class="t " style="left:80.5px;top:382.61px;letter-spacing:0.01px;font-size:10.4px;color:#6e6e6e">renderText(CharSequence, Object...):void</div>
<svg class="a" style="left:52px;top:398.48px" width="12.5" height="11.5" viewBox="0 0 12.5 11.5"><defs><radialGradient id="mg" cx=".42" cy=".28" r=".78"><stop offset="0" stop-color="#fff4ee"/><stop offset=".5" stop-color="#fab4a0"/><stop offset="1" stop-color="#ea6650"/></radialGradient></defs><circle cx="6.25" cy="5.75" r="5.15" fill="url(#mg)" stroke="#dc5c46" stroke-width=".9"/><text x="6.55" y="7.95" font-family="Liberation Sans, sans-serif" font-size="7.8" font-weight="bold" fill="#a02a1c" text-anchor="middle">m</text><path d="M0.2 8.8 L2.5 6.8 L4.8 8.8 L2.5 10.8 Z" fill="#fff9a0" stroke="#a89a38" stroke-width=".6"/></svg>
<svg class="a" style="left:67.7px;top:398.98px" width="7" height="11" viewBox="0 0 7 11"><circle cx="3.5" cy="3" r="2.6" fill="#8ccdf2" stroke="#3a86b8" stroke-width=".8"/><circle cx="3" cy="2.3" r="1" fill="#dff2fd"/><path d="M3.5 5.4 L3.5 10.4 M3.5 7.2 L5.4 7.2 M3.5 9.2 L5.1 9.2" stroke="#3a86b8" stroke-width="1.6" fill="none"/><path d="M3.3 5.6 L3.3 10" stroke="#8ccdf2" stroke-width=".6"/></svg>
<div class="t " style="left:80.5px;top:397.78000000000003px;letter-spacing:-0.09px;font-size:10.4px;color:#6e6e6e">renderXml(String):void</div>
<svg class="a" style="left:52px;top:413.65px" width="12.5" height="11.5" viewBox="0 0 12.5 11.5"><defs><radialGradient id="mg" cx=".42" cy=".28" r=".78"><stop offset="0" stop-color="#fff4ee"/><stop offset=".5" stop-color="#fab4a0"/><stop offset="1" stop-color="#ea6650"/></radialGradient></defs><circle cx="6.25" cy="5.75" r="5.15" fill="url(#mg)" stroke="#dc5c46" stroke-width=".9"/><text x="6.55" y="7.95" font-family="Liberation Sans, sans-serif" font-size="7.8" font-weight="bold" fill="#a02a1c" text-anchor="middle">m</text><path d="M0.2 8.8 L2.5 6.8 L4.8 8.8 L2.5 10.8 Z" fill="#fff9a0" stroke="#a89a38" stroke-width=".6"/></svg>
<svg class="a" style="left:67.7px;top:414.15px" width="7" height="11" viewBox="0 0 7 11"><circle cx="3.5" cy="3" r="2.6" fill="#8ccdf2" stroke="#3a86b8" stroke-width=".8"/><circle cx="3" cy="2.3" r="1" fill="#dff2fd"/><path d="M3.5 5.4 L3.5 10.4 M3.5 7.2 L5.4 7.2 M3.5 9.2 L5.1 9.2" stroke="#3a86b8" stroke-width="1.6" fill="none"/><path d="M3.3 5.6 L3.3 10" stroke="#8ccdf2" stroke-width=".6"/></svg>
<div class="t " style="left:80.5px;top:412.95px;letter-spacing:-0.05px;font-size:10.4px;color:#6e6e6e">renderXml(Document):void</div>
<svg class="a" style="left:52px;top:428.82px" width="12.5" height="11.5" viewBox="0 0 12.5 11.5"><defs><radialGradient id="mg" cx=".42" cy=".28" r=".78"><stop offset="0" stop-color="#fff4ee"/><stop offset=".5" stop-color="#fab4a0"/><stop offset="1" stop-color="#ea6650"/></radialGradient></defs><circle cx="6.25" cy="5.75" r="5.15" fill="url(#mg)" stroke="#dc5c46" stroke-width=".9"/><text x="6.55" y="7.95" font-family="Liberation Sans, sans-serif" font-size="7.8" font-weight="bold" fill="#a02a1c" text-anchor="middle">m</text><path d="M0.2 8.8 L2.5 6.8 L4.8 8.8 L2.5 10.8 Z" fill="#fff9a0" stroke="#a89a38" stroke-width=".6"/></svg>
<svg class="a" style="left:67.7px;top:429.32px" width="7" height="11" viewBox="0 0 7 11"><circle cx="3.5" cy="3" r="2.6" fill="#8ccdf2" stroke="#3a86b8" stroke-width=".8"/><circle cx="3" cy="2.3" r="1" fill="#dff2fd"/><path d="M3.5 5.4 L3.5 10.4 M3.5 7.2 L5.4 7.2 M3.5 9.2 L5.1 9.2" stroke="#3a86b8" stroke-width="1.6" fill="none"/><path d="M3.3 5.6 L3.3 10" stroke="#8ccdf2" stroke-width=".6"/></svg>
<div class="t " style="left:80.5px;top:428.12px;letter-spacing:-0.10px;font-size:10.4px;color:#6e6e6e">renderBinary(InputStream):void</div>
<svg class="a" style="left:52px;top:443.99px" width="12.5" height="11.5" viewBox="0 0 12.5 11.5"><defs><radialGradient id="mg" cx=".42" cy=".28" r=".78"><stop offset="0" stop-color="#fff4ee"/><stop offset=".5" stop-color="#fab4a0"/><stop offset="1" stop-color="#ea6650"/></radialGradient></defs><circle cx="6.25" cy="5.75" r="5.15" fill="url(#mg)" stroke="#dc5c46" stroke-width=".9"/><text x="6.55" y="7.95" font-family="Liberation Sans, sans-serif" font-size="7.8" font-weight="bold" fill="#a02a1c" text-anchor="middle">m</text><path d="M0.2 8.8 L2.5 6.8 L4.8 8.8 L2.5 10.8 Z" fill="#fff9a0" stroke="#a89a38" stroke-width=".6"/></svg>
<svg class="a" style="left:67.7px;top:444.49px" width="7" height="11" viewBox="0 0 7 11"><circle cx="3.5" cy="3" r="2.6" fill="#8ccdf2" stroke="#3a86b8" stroke-width=".8"/><circle cx="3" cy="2.3" r="1" fill="#dff2fd"/><path d="M3.5 5.4 L3.5 10.4 M3.5 7.2 L5.4 7.2 M3.5 9.2 L5.1 9.2" stroke="#3a86b8" stroke-width="1.6" fill="none"/><path d="M3.3 5.6 L3.3 10" stroke="#8ccdf2" stroke-width=".6"/></svg>
<div class="t " style="left:80.5px;top:443.29px;letter-spacing:-0.09px;font-size:10.4px;color:#6e6e6e">renderBinary(InputStream, String):void</div>
<svg class="a" style="left:52px;top:459.16px" width="12.5" height="11.5" viewBox="0 0 12.5 11.5"><defs><radialGradient id="mg" cx=".42" cy=".28" r=".78"><stop offset="0" stop-color="#fff4ee"/><stop offset=".5" stop-color="#fab4a0"/><stop offset="1" stop-color="#ea6650"/></radialGradient></defs><circle cx="6.25" cy="5.75" r="5.15" fill="url(#mg)" stroke="#dc5c46" stroke-width=".9"/><text x="6.55" y="7.95" font-family="Liberation Sans, sans-serif" font-size="7.8" font-weight="bold" fill="#a02a1c" text-anchor="middle">m</text><path d="M0.2 8.8 L2.5 6.8 L4.8 8.8 L2.5 10.8 Z" fill="#fff9a0" stroke="#a89a38" stroke-width=".6"/></svg>
<svg class="a" style="left:67.7px;top:459.66px" width="7" height="11" viewBox="0 0 7 11"><circle cx="3.5" cy="3" r="2.6" fill="#8ccdf2" stroke="#3a86b8" stroke-width=".8"/><circle cx="3" cy="2.3" r="1" fill="#dff2fd"/><path d="M3.5 5.4 L3.5 10.4 M3.5 7.2 L5.4 7.2 M3.5 9.2 L5.1 9.2" stroke="#3a86b8" stroke-width="1.6" fill="none"/><path d="M3.3 5.6 L3.3 10" stroke="#8ccdf2" stroke-width=".6"/></svg>
<div class="t " style="left:80.5px;top:458.46000000000004px;letter-spacing:-0.14px;font-size:10.4px;color:#6e6e6e">renderBinary(File):void</div>
<svg class="a" style="left:52px;top:474.33000000000004px" width="12.5" height="11.5" viewBox="0 0 12.5 11.5"><defs><radialGradient id="mg" cx=".42" cy=".28" r=".78"><stop offset="0" stop-color="#fff4ee"/><stop offset=".5" stop-color="#fab4a0"/><stop offset="1" stop-color="#ea6650"/></radialGradient></defs><circle cx="6.25" cy="5.75" r="5.15" fill="url(#mg)" stroke="#dc5c46" stroke-width=".9"/><text x="6.55" y="7.95" font-family="Liberation Sans, sans-serif" font-size="7.8" font-weight="bold" fill="#a02a1c" text-anchor="middle">m</text><path d="M0.2 8.8 L2.5 6.8 L4.8 8.8 L2.5 10.8 Z" fill="#fff9a0" stroke="#a89a38" stroke-width=".6"/></svg>
<svg class="a" style="left:67.7px;top:474.83000000000004px" width="7" height="11" viewBox="0 0 7 11"><circle cx="3.5" cy="3" r="2.6" fill="#8ccdf2" stroke="#3a86b8" stroke-width=".8"/><circle cx="3" cy="2.3" r="1" fill="#dff2fd"/><path d="M3.5 5.4 L3.5 10.4 M3.5 7.2 L5.4 7.2 M3.5 9.2 L5.1 9.2" stroke="#3a86b8" stroke-width="1.6" fill="none"/><path d="M3.3 5.6 L3.3 10" stroke="#8ccdf2" stroke-width=".6"/></svg>
<div class="t " style="left:80.5px;top:473.63000000000005px;letter-spacing:-0.12px;font-size:10.4px;color:#6e6e6e">renderBinary(File, String):void</div>
<div class="a" style="left:322px;top:336.8px;width:11.5px;height:151.0px;background:linear-gradient(90deg,#d9d9d9,#f4f4f4 35%,#fff 65%,#f0f0f0);border-left:1px solid #c4c4c4"></div>
<div class="a" style="left:322px;top:336.8px;width:11.5px;height:5px;background:linear-gradient(rgba(0,0,0,.18),rgba(0,0,0,0))"></div>
<div class="a" style="left:322px;top:453.8px;width:11.5px;height:8px;border-radius:0 0 6px 6px;background:linear-gradient(90deg,#d4d4d4,#ededed 40%,#f4f4f4 70%,#e4e4e4)"></div>
<div class="a" style="left:322px;top:461.8px;width:11.5px;height:26px;background:linear-gradient(90deg,#efefef,#fff 50%,#f4f4f4)"></div>
<div class="a" style="left:322px;top:474.8px;width:11.5px;height:1px;background:#bdbdbd"></div>
<div class="a" style="left:322px;top:487.3px;width:11.5px;height:1px;background:#bdbdbd"></div>
<svg class="a" style="left:325px;top:465.8px" width="6" height="5" viewBox="0 0 6 5"><path d="M3 0 L6 5 L0 5 Z" fill="#2a2a2a"/></svg>
<svg class="a" style="left:325px;top:479.3px" width="6" height="5" viewBox="0 0 6 5"><path d="M3 5 L6 0 L0 0 Z" fill="#2a2a2a"/></svg>
<div class="a" style="left:322.4px;top:340.3px;width:10.2px;height:17.899999999999977px;border-radius:5.1px;background:linear-gradient(90deg,#2a66cc 0,#4c96ea 14%,#7cbcf6 30%,#5aa2ee 50%,#9ad0fa 72%,#6eb2f4 88%,#3a7cd8 100%);box-shadow:0 0 0 .5px #2a58b8"></div>
<div class="btn" style="left:16.7px;width:81.7px"></div>
<div class="t " style="left:41px;top:491.8px;letter-spacing:-0.36px;font-size:10.3px">REST Client</div>
<div class="btn" style="left:104px;width:73px"></div>
<div class="t " style="left:127.5px;top:491.8px;letter-spacing:-0.03px;font-size:10.3px">Atlassian</div>
<div class="btn" style="left:181.7px;width:66.3px"></div>
<div class="t " style="left:203px;top:491.8px;letter-spacing:0.02px;font-size:10.3px"><u>6</u>: TODO</div>
<div class="btn" style="left:253.9px;width:79.6px"></div>
<div class="t " style="left:276.2px;top:491.8px;letter-spacing:-0.12px;font-size:10.3px"><u>9</u>: Changes</div>
<svg class="a" style="left:24px;top:492px" width="12" height="12" viewBox="0 0 12 12"><ellipse cx="6" cy="6.5" rx="5.5" ry="5" fill="#5a98e0" stroke="#2a58a8" stroke-width=".7"/><rect x="2.5" y="5" width="7" height="4" fill="#fff"/><path d="M3.5 8 V6 L5 8 V6 M6.5 6 V8 L8 6 V8" stroke="#2a58a8" stroke-width=".6" fill="none"/></svg>
<svg class="a" style="left:110px;top:491.5px" width="13" height="13" viewBox="0 0 13 13"><path d="M6.5 0.5 L9 3 L6.5 5.5 L4 3 Z M6.5 7.5 L9 10 L6.5 12.5 L4 10 Z M0.5 6.5 L3 4 L5.5 6.5 L3 9 Z M7.5 6.5 L10 4 L12.5 6.5 L10 9 Z" fill="#c8dcf8" stroke="#1a3a88" stroke-width=".9"/></svg>
<svg class="a" style="left:187px;top:492px" width="12" height="12" viewBox="0 0 12 12"><circle cx="5.5" cy="5" r="4" fill="#f0c090" stroke="#8a5820" stroke-width=".6"/><path d="M1.5 4 Q5.5 -1 9.5 4 Z" fill="#8a6a3a"/><rect x="6" y="6" width="5.5" height="5.5" fill="#f8f8f8" stroke="#4a78b8" stroke-width=".7"/><path d="M7 9 L8.3 10.3 L10.5 7.3" stroke="#2a9a3a" stroke-width="1" fill="none"/></svg>
<svg class="a" style="left:260px;top:492px" width="12" height="12" viewBox="0 0 12 12"><rect x="0.5" y="0.5" width="7" height="7" fill="#3a78d8" stroke="#1a4898" stroke-width=".7"/><rect x="4.5" y="4.5" width="7" height="7" fill="#40b050" stroke="#1a7030" stroke-width=".7"/><circle cx="7" cy="5" r="2.2" fill="#f0c020"/></svg>
<div class="a" style="left:0;top:508.2px;width:916.3px;height:1px;background:#bcbcbc"></div>
<div class="a" style="left:0;top:509.2px;width:916.3px;height:15px;background:#efefef"></div>
<div class="a" style="left:0;top:524.2px;width:916.3px;height:1.6px;background:#fbfbfb"></div>
<div class="a" style="left:444.2px;top:510px;width:1px;height:14.5px;background:#a9a9a9"></div>
<div class="a" style="left:460.5px;top:510px;width:1px;height:14.5px;background:#a9a9a9"></div>
<div class="a" style="left:560.5px;top:510px;width:1px;height:14.5px;background:#a9a9a9"></div>
<div class="a" style="left:577.8px;top:510px;width:1px;height:14.5px;background:#a9a9a9"></div>
<div class="a" style="left:641.6px;top:510px;width:1px;height:14.5px;background:#a9a9a9"></div>
<div class="a" style="left:733.3px;top:510px;width:1px;height:14.5px;background:#a9a9a9"></div>
<div class="a" style="left:752px;top:510px;width:1px;height:14.5px;background:#a9a9a9"></div>
<div class="a" style="left:772px;top:510px;width:1px;height:14.5px;background:#a9a9a9"></div>
<div class="a" style="left:793px;top:510px;width:1px;height:14.5px;background:#a9a9a9"></div>
<div class="a" style="left:810.6px;top:510px;width:1px;height:14.5px;background:#a9a9a9"></div>
<div class="t " style="left:463.8px;top:510.6px;letter-spacing:0.22px;font-size:10.6px">5:14</div>
<div class="t " style="left:580.3px;top:510.6px;letter-spacing:0.22px;font-size:10.6px">Insert</div>
<div class="t " style="left:644.8px;top:510.6px;letter-spacing:-0.07px;font-size:10.6px">MacRoman</div>
<div class="a" style="left:828.7px;top:509.6px;width:54.2px;height:15.6px;background:linear-gradient(#9aabea,#6f88da)"></div>
<div class="t " style="left:835.3px;top:510.6px;letter-spacing:0.16px;font-size:11px;color:#111">321M of 508M</div>
<svg class="a" style="left:447.3px;top:512px" width="10" height="10" viewBox="0 0 10 10"><circle cx="5" cy="5" r="3.2" fill="none" stroke="#c2c2c2" stroke-width="2.4" stroke-dasharray="1.4 1.1"/></svg>
<svg class="a" style="left:736px;top:510.5px" width="12" height="13" viewBox="0 0 12 13"><path d="M1 5.5 H11 L9.5 4.5 Q9 1 6 1 Q3 1 2.5 4.5 Z" fill="#4a4a5a"/><circle cx="6" cy="7.5" r="3" fill="#f0c898" stroke="#8a6030" stroke-width=".5"/><path d="M2.5 12.5 Q2.5 10 6 10 Q9.5 10 9.5 12.5 Z" fill="#d8a020"/><path d="M3.5 7 H8.5" stroke="#333" stroke-width="1.3"/></svg>
<div class="a" style="left:795.4px;top:512px;width:11px;height:11px;border:1px solid #c4c4c4;background:#f6f6f6"></div>
<svg class="a" style="left:814.7px;top:510.7px" width="11" height="13" viewBox="0 0 11 13"><path d="M1.5 3 H9.5 V11 Q9.5 12.5 5.5 12.5 Q1.5 12.5 1.5 11 Z" fill="#b8d8f0" stroke="#3a78b0" stroke-width=".8"/><ellipse cx="5.5" cy="3" rx="4" ry="1.8" fill="#e0f0ff" stroke="#3a78b0" stroke-width=".8"/><path d="M3 0.5 Q5.5 2 8 0.5" stroke="#3a78b0" fill="none" stroke-width=".8"/></svg>
<svg class="a" style="left:908.3px;top:517.3px" width="8" height="8" viewBox="0 0 8 8"><path d="M7.8 0.6 L0.6 7.8 M7.8 3.4 L3.4 7.8 M7.8 6 L6 7.8" stroke="#a4a4a4" stroke-width=".9"/></svg>
<div class="a" style="left:340px;top:44px;width:557px;height:445px;background:#fff;border:1px solid #9a9a9a;border-top:none"></div>
<div class="a" style="left:340px;top:43px;width:557px;height:47px;background:#ededed"></div>
<div class="tab" style="left:340.2px;top:44px;width:283.3px;height:16px"></div>
<div class="tab" style="left:622.5px;top:44px;width:274.2px;height:16px"></div>
<div class="tab" style="left:340.2px;top:59px;width:148.3px;height:16px"></div>
<div class="tab" style="left:487.5px;top:59px;width:165.5px;height:16px"></div>
<div class="tab" style="left:652px;top:59px;width:122px;height:16px"></div>
<div class="tab" style="left:773px;top:59px;width:123.7px;height:16px"></div>
<div class="tab" style="left:340.2px;top:74.2px;width:100.8px;height:15.6px;border-bottom:1px solid #8c8c8c"></div>
<div class="tab" style="left:440px;top:74.2px;width:142px;height:15.6px;border-bottom:1px solid #8c8c8c"></div>
<div class="tab" style="left:581px;top:74.2px;width:168px;height:15.6px;border-bottom:1px solid #8c8c8c"></div>
<div class="a" style="left:341px;top:89.8px;width:555px;height:3px;background:#fff"></div>
<div class="a" style="left:340.2px;top:92.7px;width:556.5px;height:1px;background:#b2b2b2"></div>
<div class="tab" style="left:748px;top:72.9px;width:148.7px;height:17px;background:#fff"></div>
<svg class="a" style="left:438px;top:46.5px" width="9" height="12" viewBox="0 0 9 12"><path d="M0.5 0.5 L6 0.5 L8.5 3 L8.5 11.5 L0.5 11.5 Z" fill="#f4f8fc" stroke="#7890b0" stroke-width="1"/><path d="M6 0.5 L6 3 L8.5 3" fill="#d0d8e8" stroke="#7890b0" stroke-width=".7"/><circle cx="4.5" cy="7.5" r="2.3" fill="#e8d020" stroke="#907810" stroke-width=".7"/></svg>
<div class="t green" style="left:452.4px;top:45px;letter-spacing:0.15px;font-size:11px">gears_init.js</div>
<svg class="a" style="left:609px;top:49px" width="6" height="6" viewBox="0 0 6 6"><path d="M.5 .5 L5.5 5.5 M5.5 .5 L.5 5.5" stroke="#a4a4a4" stroke-width="1.2"/></svg>
<svg class="a" style="left:719.5px;top:46px" width="9" height="12" viewBox="0 0 9 12"><path d="M0.5 0.5 L6 0.5 L8.5 3 L8.5 11.5 L0.5 11.5 Z" fill="#30c060" stroke="#108040" stroke-width="1"/><path d="M6 0.5 L6 3 L8.5 3" fill="#b0f0c8" stroke="#108040" stroke-width=".7"/><path d="M3 5 L3 10 M3 7.5 L5.5 7.5 L5.5 10" stroke="#fff" stroke-width="1.2" fill="none"/></svg>
<div class="t blue" style="left:734.7px;top:45px;letter-spacing:0.28px;font-size:11px">main.html</div>
<svg class="a" style="left:881.5px;top:49px" width="6" height="6" viewBox="0 0 6 6"><path d="M.5 .5 L5.5 5.5 M5.5 .5 L.5 5.5" stroke="#a4a4a4" stroke-width="1.2"/></svg>
<svg class="a" style="left:358.5px;top:61.5px" width="11.5" height="11.5" viewBox="0 0 11.5 11.5"><defs><radialGradient id="cg" cx=".4" cy=".32" r=".75"><stop offset="0" stop-color="#ffffff"/><stop offset=".55" stop-color="#cfe5fb"/><stop offset="1" stop-color="#7cb4f0"/></radialGradient></defs><circle cx="5.75" cy="5.75" r="5.15" fill="url(#cg)" stroke="#3f7fd6" stroke-width="1"/><path d="M7.55 4.25 A2.35 2.35 0 1 0 7.55 7.25" fill="none" stroke="#3c6fc4" stroke-width="1.5"/><path d="M7.55 4.25 A2.35 2.35 0 1 0 7.55 7.25" fill="none" stroke="#e8f2ff" stroke-width=".5"/></svg>
<div class="t blue" style="left:374.6px;top:60.3px;letter-spacing:0.21px;font-size:11px">Application.java</div>
<svg class="a" style="left:473.5px;top:64.3px" width="6" height="6" viewBox="0 0 6 6"><path d="M.5 .5 L5.5 5.5 M5.5 .5 L.5 5.5" stroke="#a4a4a4" stroke-width="1.2"/></svg>
<svg class="a" style="left:505px;top:61.5px" width="11.5" height="11.5" viewBox="0 0 11.5 11.5"><defs><radialGradient id="cg" cx=".4" cy=".32" r=".75"><stop offset="0" stop-color="#ffffff"/><stop offset=".55" stop-color="#cfe5fb"/><stop offset="1" stop-color="#7cb4f0"/></radialGradient></defs><circle cx="5.75" cy="5.75" r="5.15" fill="url(#cg)" stroke="#3f7fd6" stroke-width="1"/><path d="M7.55 4.25 A2.35 2.35 0 1 0 7.55 7.25" fill="none" stroke="#3c6fc4" stroke-width="1.5"/><path d="M7.55 4.25 A2.35 2.35 0 1 0 7.55 7.25" fill="none" stroke="#e8f2ff" stroke-width=".5"/></svg>
<div class="t blue" style="left:522.6px;top:60.3px;letter-spacing:-0.05px;font-size:11px">EmailMetaData.java</div>
<svg class="a" style="left:638.5px;top:64.3px" width="6" height="6" viewBox="0 0 6 6"><path d="M.5 .5 L5.5 5.5 M5.5 .5 L.5 5.5" stroke="#a4a4a4" stroke-width="1.2"/></svg>
<svg class="a" style="left:671.5px;top:61px" width="9" height="12" viewBox="0 0 9 12"><path d="M0.5 0.5 L6 0.5 L8.5 3 L8.5 11.5 L0.5 11.5 Z" fill="#30c060" stroke="#108040" stroke-width="1"/><path d="M6 0.5 L6 3 L8.5 3" fill="#b0f0c8" stroke="#108040" stroke-width=".7"/><path d="M3 5 L3 10 M3 7.5 L5.5 7.5 L5.5 10" stroke="#fff" stroke-width="1.2" fill="none"/></svg>
<div class="t " style="left:686.8px;top:60.3px;letter-spacing:0.35px;font-size:11px">email.html</div>
<svg class="a" style="left:759.5px;top:64.3px" width="6" height="6" viewBox="0 0 6 6"><path d="M.5 .5 L5.5 5.5 M5.5 .5 L.5 5.5" stroke="#a4a4a4" stroke-width="1.2"/></svg>
<svg class="a" style="left:793px;top:61px" width="9" height="12" viewBox="0 0 9 12"><path d="M0.5 0.5 L6 0.5 L8.5 3 L8.5 11.5 L0.5 11.5 Z" fill="#30c060" stroke="#108040" stroke-width="1"/><path d="M6 0.5 L6 3 L8.5 3" fill="#b0f0c8" stroke="#108040" stroke-width=".7"/><path d="M3 5 L3 10 M3 7.5 L5.5 7.5 L5.5 10" stroke="#fff" stroke-width="1.2" fill="none"/></svg>
<div class="t blue" style="left:808px;top:60.3px;letter-spacing:0.37px;font-size:11px">index.html</div>
<svg class="a" style="left:881.5px;top:64.3px" width="6" height="6" viewBox="0 0 6 6"><path d="M.5 .5 L5.5 5.5 M5.5 .5 L.5 5.5" stroke="#a4a4a4" stroke-width="1.2"/></svg>
<svg class="a" style="left:360px;top:76.5px" width="9" height="12" viewBox="0 0 9 12"><path d="M0.5 0.5 L6 0.5 L8.5 3 L8.5 11.5 L0.5 11.5 Z" fill="#f4f8fc" stroke="#6080b8" stroke-width="1"/><path d="M6 0.5 L6 3 L8.5 3" fill="#d0d8e8" stroke="#6080b8" stroke-width=".7"/><path d="M2.2 4.6 H6.8 M2.2 6.6 H6.8 M2.2 8.6 H6.8 M2.2 10.2 H6.8" stroke="#4a78d0" stroke-width=".9"/></svg>
<div class="t blue" style="left:375px;top:75.5px;letter-spacing:0.02px;font-size:11px">routes</div>
<svg class="a" style="left:425.5px;top:79.5px" width="6" height="6" viewBox="0 0 6 6"><path d="M.5 .5 L5.5 5.5 M5.5 .5 L.5 5.5" stroke="#a4a4a4" stroke-width="1.2"/></svg>
<svg class="a" style="left:459px;top:76.5px" width="11.5" height="11.5" viewBox="0 0 11.5 11.5"><defs><radialGradient id="cg" cx=".4" cy=".32" r=".75"><stop offset="0" stop-color="#ffffff"/><stop offset=".55" stop-color="#cfe5fb"/><stop offset="1" stop-color="#7cb4f0"/></radialGradient></defs><circle cx="5.75" cy="5.75" r="5.15" fill="url(#cg)" stroke="#3f7fd6" stroke-width="1"/><path d="M7.55 4.25 A2.35 2.35 0 1 0 7.55 7.25" fill="none" stroke="#3c6fc4" stroke-width="1.5"/><path d="M7.55 4.25 A2.35 2.35 0 1 0 7.55 7.25" fill="none" stroke="#e8f2ff" stroke-width=".5"/></svg>
<div class="t blue" style="left:475.8px;top:75.5px;letter-spacing:-0.19px;font-size:11px">EMailDAO.java</div>
<svg class="a" style="left:566.5px;top:79.5px" width="6" height="6" viewBox="0 0 6 6"><path d="M.5 .5 L5.5 5.5 M5.5 .5 L.5 5.5" stroke="#a4a4a4" stroke-width="1.2"/></svg>
<svg class="a" style="left:600px;top:76px" width="9" height="12" viewBox="0 0 9 12"><path d="M0.5 0.5 L6 0.5 L8.5 3 L8.5 11.5 L0.5 11.5 Z" fill="#30c060" stroke="#108040" stroke-width="1"/><path d="M6 0.5 L6 3 L8.5 3" fill="#b0f0c8" stroke="#108040" stroke-width=".7"/><path d="M3 5 L3 10 M3 7.5 L5.5 7.5 L5.5 10" stroke="#fff" stroke-width="1.2" fill="none"/></svg>
<div class="t blue" style="left:615.3px;top:75.5px;letter-spacing:0.11px;font-size:11px">composeEmail.html</div>
<svg class="a" style="left:733.5px;top:79.5px" width="6" height="6" viewBox="0 0 6 6"><path d="M.5 .5 L5.5 5.5 M5.5 .5 L.5 5.5" stroke="#a4a4a4" stroke-width="1.2"/></svg>
<svg class="a" style="left:766px;top:75.5px" width="11.5" height="11.5" viewBox="0 0 11.5 11.5"><defs><radialGradient id="cg" cx=".4" cy=".32" r=".75"><stop offset="0" stop-color="#ffffff"/><stop offset=".55" stop-color="#cfe5fb"/><stop offset="1" stop-color="#7cb4f0"/></radialGradient></defs><circle cx="5.75" cy="5.75" r="5.15" fill="url(#cg)" stroke="#3f7fd6" stroke-width="1"/><path d="M7.55 4.25 A2.35 2.35 0 1 0 7.55 7.25" fill="none" stroke="#3c6fc4" stroke-width="1.5"/><path d="M7.55 4.25 A2.35 2.35 0 1 0 7.55 7.25" fill="none" stroke="#e8f2ff" stroke-width=".5"/></svg>
<div class="t red" style="left:782.3px;top:74.8px;letter-spacing:0.22px;font-size:11px">Application.java</div>
<svg class="a" style="left:881.5px;top:78.8px" width="6" height="6" viewBox="0 0 6 6"><path d="M.5 .5 L5.5 5.5 M5.5 .5 L.5 5.5" stroke="#a4a4a4" stroke-width="1.2"/></svg>
<div class="a" style="left:341px;top:93.7px;width:17px;height:394.3px;background:#f0f0f0"></div>
<div class="a" style="left:358px;top:93.7px;width:0;height:394.3px;border-left:1px dotted #b0b0b0"></div>
<div class="a" style="left:341px;top:132px;width:531.3px;height:9.4px;background:#ffffd7"></div>
<div class="a" style="left:872.3px;top:93.7px;width:13px;height:394.3px;background:linear-gradient(90deg,#e2e2e2,#f7f7f7 45%,#f2f2f2)"></div>
<div class="a" style="left:885.3px;top:93.7px;width:10.7px;height:394.3px;background:#eeeeee"></div>
<div class="a" style="left:885.3px;top:95px;width:9px;height:8.7px;background:#ffff00;border-right:1px solid #c8c800;border-bottom:1px solid #c8c800"></div>
<div class="a" style="left:885.3px;top:144.8px;width:9px;height:2px;background:#f2e600"></div>
<div class="a" style="left:885.3px;top:164px;width:9px;height:2px;background:#f2e600"></div>
<div class="code" style="left:363px;top:94.8px"><span class="kw">package</span> controllers;</div>
<div class="code" style="left:363px;top:112.6px"><span class="kw">import</span> play.mvc.*;</div>
<div class="code" style="left:363px;top:131.8px"><span class="kw">public class</span> <span class="un">Application</span> <span class="kw">extends</span> Controller {</div>
<div class="code" style="left:363px;top:151.0px">    <span class="kw">public static void</span> <span class="un">index</span>() {</div>
<div class="code" style="left:363px;top:160.6px">        <i>render</i>();</div>
<div class="code" style="left:363px;top:170.6px">    }</div>
<div class="code" style="left:363px;top:189.9px">}</div>
<div class="a" style="left:435.5px;top:132px;width:1.2px;height:9.4px;background:#000"></div>
<svg class="a" style="left:354.5px;top:151.3px" width="8" height="9" viewBox="0 0 8 9"><path d="M0.5 0.5 H7.5 V5.5 L4 8.5 L0.5 5.5 Z" fill="#fff" stroke="#8a8a8a" stroke-width=".9"/><path d="M2.3 3.5 H5.7" stroke="#666" stroke-width=".9"/></svg>
<svg class="a" style="left:354.5px;top:169.3px" width="8" height="9" viewBox="0 0 8 9"><path d="M0.5 8.5 H7.5 V3.5 L4 0.5 L0.5 3.5 Z" fill="#fff" stroke="#8a8a8a" stroke-width=".9"/><path d="M2.3 5.5 H5.7" stroke="#666" stroke-width=".9"/></svg>
<div class="vtab" style="left:899px;top:44.5px;width:15.7px;height:97.5px;background:#f3f1f0"></div>
<div class="vtxt" style="left:913.2px;top:61.7px;transform:rotate(90deg);letter-spacing:0.56px;color:#1a1a1a"><u>2</u>: Commander</div>
<svg class="a" style="left:901px;top:46.5px" width="12" height="12" viewBox="0 0 12 12"><path d="M1 4.5 Q6 -2 11 4.5 Z" fill="#2a9a4a"/><path d="M1 4.5 H11 V6 H1 Z" fill="#d83030"/><circle cx="6" cy="8" r="3" fill="#f0c8a0"/><path d="M2 12 Q2 9.5 6 10 Q10 9.5 10 12 Z" fill="#3a68c8"/><circle cx="6" cy="3" r="1" fill="#f8e040"/></svg>
<div class="vtab" style="left:899px;top:148px;width:15.7px;height:65.5px;background:#f3f1f0"></div>
<div class="vtxt" style="left:913.2px;top:168.3px;transform:rotate(90deg);letter-spacing:-0.12px;color:#1a1a1a">Ant Build</div>
<svg class="a" style="left:901px;top:152.5px" width="12" height="13" viewBox="0 0 12 13"><path d="M6 1 V12 M1.5 2.5 L10.5 10.5 M10.5 2.5 L1.5 10.5 M1 6.5 H11" stroke="#7a4aa8" stroke-width="1.1"/><ellipse cx="6" cy="6.5" rx="2" ry="3.3" fill="#9a5ac8"/><circle cx="6" cy="2.6" r="1.5" fill="#6a3a98"/></svg>
<div class="vtab" style="left:899px;top:221px;width:15.7px;height:58.5px;background:#f3f1f0"></div>
<div class="vtxt" style="left:913.2px;top:243.3px;transform:rotate(90deg);letter-spacing:-0.19px;color:#1a1a1a">IDEtalk</div>
<svg class="a" style="left:901px;top:228px" width="12" height="12" viewBox="0 0 12 12"><circle cx="6" cy="3.8" r="3" fill="#f0b060" stroke="#a06020" stroke-width=".6"/><path d="M2.5 3 Q6 -1.5 9.5 3 Q6 1.5 2.5 3 Z" fill="#a85a20"/><path d="M0.5 11.5 Q0.5 7 6 7 Q11.5 7 11.5 11.5 Z" fill="#30a040" stroke="#106020" stroke-width=".6"/></svg>
<div class="vtab" style="left:899px;top:285.5px;width:15.7px;height:100px;background:#f3f1f0"></div>
<div class="vtxt" style="left:913.2px;top:311px;transform:rotate(90deg);letter-spacing:-0.15px;color:#1a1a1a">Maven Projects</div>
<svg class="a" style="left:901px;top:294.5px" width="12" height="12" viewBox="0 0 12 12"><circle cx="6" cy="6" r="4.2" fill="none" stroke="#4a80c8" stroke-width="2.2" stroke-dasharray="1.9 1.4"/><circle cx="6" cy="6" r="3" fill="#d8e8fa" stroke="#4a80c8" stroke-width="1"/><circle cx="6" cy="6" r="1.2" fill="#fff" stroke="#4a80c8" stroke-width=".7"/></svg>
</div>
</body></html>
